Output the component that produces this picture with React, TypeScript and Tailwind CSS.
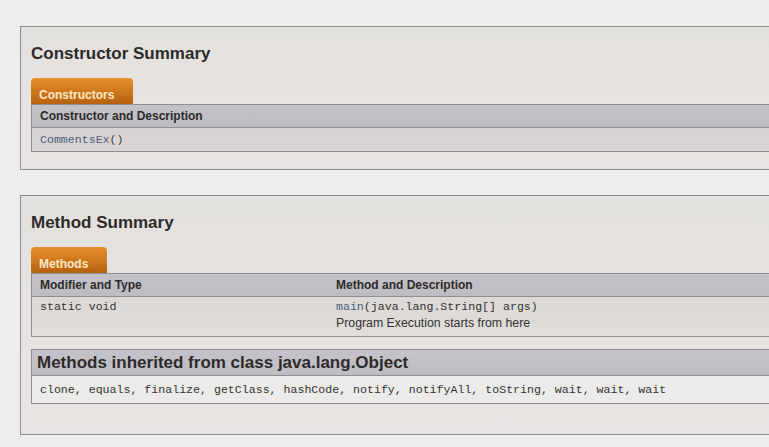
export default function App() {
  const sans = { fontFamily: '"Liberation Sans", Arial, sans-serif' };
  const inherited =
    "clone, equals, finalize, getClass, hashCode, notify, notifyAll, toString, wait, wait, wait";

  return (
    <div
      className="w-[769px] h-[447px] overflow-hidden bg-[#eeedeb] pt-[26px] pl-[20px]"
      style={sans}
    >
      {/* Constructor Summary */}
      <section className="w-[800px] border border-[#8f8e93] bg-gradient-to-b from-[#e3e1dd] to-[#e9e5e4] pl-[10px] pb-[17px]">
        <h3 className="pt-[17px] mb-[14px] text-[17px] leading-[20px] font-bold text-[#2d2b2a]">
          Constructor Summary
        </h3>
        <div className="w-fit h-[26px] rounded-t-[4px] bg-gradient-to-b from-[#e8902c] to-[#b6610f] pl-[8px] pr-[19px] pt-[10px] text-[12px] leading-[14px] font-bold text-[#fde8c4]">
          Constructors
        </div>
        <div className="border-l border-[#8f8e93]">
          <div className="h-[24px] border-y border-[#8f8e93] bg-gradient-to-b from-[#c3c2c8] to-[#bdbcc2] pl-[8px] text-[12px] leading-[22px] font-bold text-[#2d2b2a]">
            Constructor and Description
          </div>
          <div className="h-[24px] border-b border-[#8f8e93] bg-gradient-to-b from-[#d6d1d0] to-[#dbd6d5] pl-[8px] text-[11.6px] leading-[23px] font-['Liberation_Mono',monospace] text-[#4b5e80]">
            CommentsEx<span className="text-[#3a3a3a]">()</span>
          </div>
        </div>
      </section>

      {/* Method Summary */}
      <section className="mt-[25px] w-[800px] border border-[#8f8e93] bg-gradient-to-b from-[#e3e1dd] to-[#e9e5e4] pl-[10px] pb-[30px]">
        <h3 className="pt-[17px] mb-[14px] text-[17px] leading-[20px] font-bold text-[#2d2b2a]">
          Method Summary
        </h3>
        <div className="w-fit h-[26px] rounded-t-[4px] bg-gradient-to-b from-[#e8902c] to-[#b6610f] pl-[8px] pr-[19px] pt-[10px] text-[12px] leading-[14px] font-bold text-[#fde8c4]">
          Methods
        </div>
        <div className="border-l border-[#8f8e93]">
          <div className="flex h-[24px] border-y border-[#8f8e93] bg-gradient-to-b from-[#c3c2c8] to-[#bdbcc2] text-[12px] leading-[22px] font-bold text-[#2d2b2a]">
            <div className="w-[304px] pl-[8px]">Modifier and Type</div>
            <div>Method and Description</div>
          </div>
          <div className="flex h-[40px] border-b border-[#8f8e93] bg-gradient-to-b from-[#dcd8d6] to-[#e1dddb] pt-[1px] leading-[17px]">
            <div className="w-[304px] pl-[8px] text-[11.6px] font-['Liberation_Mono',monospace] text-[#333]">
              static void
            </div>
            <div>
              <div className="text-[11.6px] font-['Liberation_Mono',monospace] text-[#333]">
                <span className="text-[#4b5e80]">main</span>(java.lang.String[] args)
              </div>
              <div className="text-[12.3px] text-[#333]">Program Execution starts from here</div>
            </div>
          </div>
        </div>

        <div className="mt-[12px] border-l border-[#8f8e93]">
          <div className="h-[27px] border-y border-[#8f8e93] bg-gradient-to-b from-[#c4c3c9] to-[#bebdc3] pl-[5px] text-[17px] leading-[25px] font-bold text-[#2d2b2a]">
            Methods inherited from class java.lang.Object
          </div>
          <div className="h-[28px] border-b border-[#8f8e93] bg-[#ecebe9] pl-[8px] text-[11.6px] leading-[27px] font-['Liberation_Mono',monospace] text-[#333]">
            {inherited}
          </div>
        </div>
      </section>
    </div>
  );
}
